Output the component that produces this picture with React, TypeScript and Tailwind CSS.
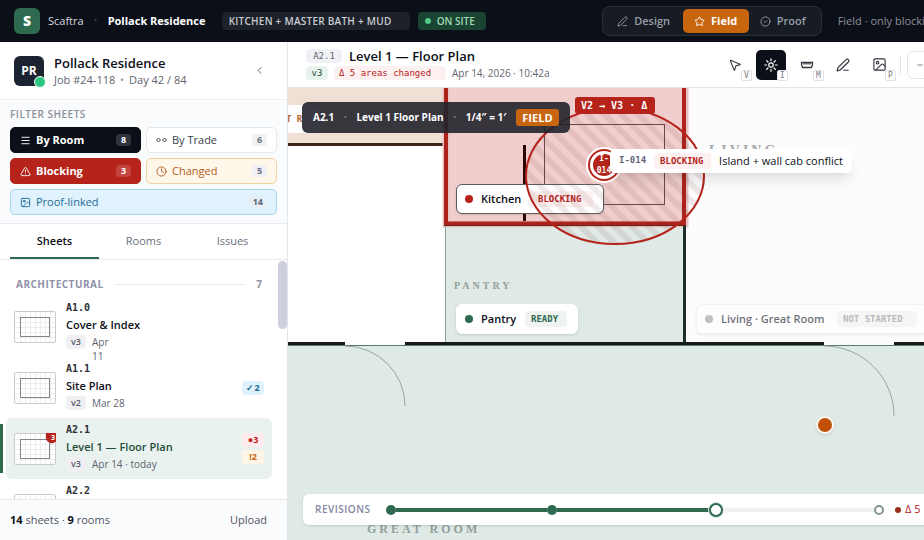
import type { ReactNode } from 'react';
import { clsx } from 'clsx';
import {
  ChevronLeft,
  CircleCheck,
  Clock,
  Image,
  Menu,
  Minus,
  MousePointer2,
  PenLine,
  Star,
  TriangleAlert,
} from 'lucide-react';

const MONO = "font-['DejaVu_Sans_Mono','Liberation_Mono',monospace]";
const SERIF = "font-['Liberation_Serif',serif]";

const TopBar = () => (
  <header className="flex h-[42px] shrink-0 items-center bg-[#0b0f17] pl-3.5 whitespace-nowrap">
    <div className="flex size-[26px] shrink-0 items-center justify-center rounded-md bg-[#2d6a4f] text-sm font-extrabold text-white">
      S
    </div>
    <span className="ml-2 shrink-0 text-[11px] text-[#d6d9de]">Scaftra</span>
    <span className="w-6 shrink-0 text-center text-xs text-[#5d636d]">·</span>
    <span className="w-[100px] shrink-0 text-[11px] font-bold text-white">Pollack Residence</span>
    <span className="ml-3.5 w-[188px] shrink-0 rounded bg-[#1d212a] px-[7px] text-[10px] leading-[18px] font-semibold tracking-wide text-[#c9ccd2]">
      KITCHEN + MASTER BATH + MUD
    </span>
    <span className="ml-2 flex w-[68px] shrink-0 items-center gap-1.5 rounded bg-[#1a4431] px-[7px] text-[10px] leading-[18px] font-semibold text-[#9fdcb8]">
      <span className="size-1.5 rounded-full bg-[#52c98a]" />
      ON SITE
    </span>
    <nav className="ml-[116px] flex h-[30px] w-[220px] shrink-0 items-center rounded-lg border border-[#2b3038] bg-[#161b24] px-0.5 text-[11px] font-semibold text-[#9a9fa8]">
      <button className="flex w-[78px] items-center justify-center gap-1.5">
        <PenLine size={11} />
        Design
      </button>
      <button className="flex h-6 w-[66px] items-center justify-center gap-1.5 rounded-[5px] bg-[#c8650f] font-bold text-white">
        <Star size={11} />
        Field
      </button>
      <button className="flex w-[68px] items-center justify-center gap-1.5">
        <CircleCheck size={11} />
        Proof
      </button>
    </nav>
    <span className="ml-4 shrink-0 text-[11px] text-[#8b9099]">Field · only blocking</span>
  </header>
);

interface FilterProps {
  icon: ReactNode;
  label: string;
  count: number;
  className: string;
  countClass: string;
}

const Filter = ({ icon, label, count, className, countClass }: FilterProps) => (
  <button
    className={clsx('flex h-[26px] items-center gap-[5px] rounded-[5px] border px-[9px] text-[11px]', className)}
  >
    {icon}
    <span>{label}</span>
    <span className={clsx('ml-auto min-w-[15px] rounded-sm px-1 text-[9px] leading-3 font-bold', countClass)}>
      {count}
    </span>
  </button>
);

const TradeIcon = () => (
  <svg width="11" height="10" viewBox="0 0 11 10" fill="none" stroke="currentColor">
    <path d="M2.500 3 4.500 5 2.500 7 .5 5ZM8.500 3 10.500 5 8.500 7 6.500 5Z" />
  </svg>
);

const Filters = () => (
  <section className="border-b border-[#e8eaed] bg-[#fafbfc] px-2.5 pt-2 pb-2">
    <h2 className="mb-1.5 text-[10px] leading-[13px] font-semibold tracking-wider text-[#8b8f9c]">FILTER SHEETS</h2>
    <div className="grid grid-cols-2 gap-[5px]">
      <Filter
        icon={<Menu size={11} />}
        label="By Room"
        count={8}
        className="border-[#0b0f17] bg-[#0b0f17] font-bold text-white"
        countClass="bg-[#30343c]"
      />
      <Filter
        icon={<TradeIcon />}
        label="By Trade"
        count={6}
        className="border-[#e4e7eb] bg-white font-medium text-[#3a3f4a]"
        countClass="bg-[#f1f2f4] text-[#6b7080]"
      />
      <Filter
        icon={<TriangleAlert size={11} />}
        label="Blocking"
        count={3}
        className="border-[#b5231a] bg-[#b5231a] font-bold text-white"
        countClass="bg-[#c5453e]"
      />
      <Filter
        icon={<Clock size={11} />}
        label="Changed"
        count={5}
        className="border-[#f0d2a4] bg-[#fff8ea] font-medium text-[#b45a1b]"
        countClass="bg-[#f1f0f4] text-[#6b6f8c]"
      />
      <Filter
        icon={<Image size={11} />}
        label="Proof-linked"
        count={14}
        className="col-span-2 border-[#a5d8f0] bg-[#e0f2fd] font-medium text-[#1d6a96]"
        countClass="bg-[#e6eff6] text-[#5a6474]"
      />
    </div>
  </section>
);

const SheetThumb = ({ flag }: { flag?: boolean }) => (
  <svg width="42" height="32" viewBox="0 0 42 32" className="shrink-0">
    <rect x=".5" y=".5" width="41" height="31" rx="1.500" fill="#fff" stroke="#c9cbce" />
    <path
      d="M6.500 1v30M11.500 1v30M16.500 1v30M21.500 1v30M26.500 1v30M31.500 1v30M36.500 1v30M1 6.500h40M1 11.500h40M1 16.500h40M1 21.500h40M1 26.500h40"
      stroke="#ededef"
    />
    <rect x="6.500" y="6.500" width="29" height="19" fill="none" stroke="#85878b" />
    {flag && (
      <>
        <path d="M32 0h10v8.500A6 6 0 0 1 32 3Z" fill="#b5231a" />
        <text x="37" y="7" fontSize="7" fontWeight="700" fill="#fff">
          3
        </text>
      </>
    )}
  </svg>
);

interface Sheet {
  code: string;
  title?: string;
  version?: string;
  date?: string;
  narrow?: boolean;
  active?: boolean;
  badges?: { text: string; className: string }[];
}

const sheets: Sheet[] = [
  { code: 'A1.0', title: 'Cover & Index', version: 'v3', date: 'Apr 11', narrow: true },
  {
    code: 'A1.1',
    title: 'Site Plan',
    version: 'v2',
    date: 'Mar 28',
    badges: [{ text: '✓2', className: 'bg-[#dff1fd] text-[#1d6a96]' }],
  },
  {
    code: 'A2.1',
    title: 'Level 1 — Floor Plan',
    version: 'v3',
    date: 'Apr 14 · today',
    active: true,
    badges: [
      { text: '●3', className: 'bg-[#fdeceb] text-[#b5231a]' },
      { text: '!2', className: 'bg-[#fff5e4] text-[#c8650f]' },
    ],
  },
  { code: 'A2.2' },
];

const SheetRow = ({ code, title, version, date, narrow, active, badges = [] }: Sheet) => (
  <li className="relative px-1.5">
    {active && <span className="absolute inset-y-1.5 left-0 w-[3px] bg-[#2d6a4f]" />}
    <button
      className={clsx('flex h-[61px] w-full items-start rounded-md px-2 text-left', active && 'bg-[#e9f2ee]')}
    >
      <span className="self-center">
        <SheetThumb flag={active} />
      </span>
      <span className="ml-2.5 flex-1 pt-1">
        <span className={clsx('block text-[10px] leading-[15px] font-bold text-[#2c3038]', MONO)}>{code}</span>
        {title && (
          <span
            className={clsx('block text-[11px] leading-5 font-semibold', active ? 'text-[#1f4d3a]' : 'text-[#0b0f17]')}
          >
            {title}
          </span>
        )}
        {version && (
          <span className="flex items-start">
            <span className="w-5 rounded-sm bg-[#f0f0f4] text-center text-[9px] leading-[14px] font-semibold text-[#555a68]">
              {version}
            </span>
            <span className={clsx('ml-1.5 text-[10px] leading-[14px] text-[#5f6470]', narrow && 'w-5')}>{date}</span>
          </span>
        )}
      </span>
      <span className="flex flex-col items-end gap-[3px] self-center">
        {badges.map((b) => (
          <span
            key={b.text}
            className={clsx('w-[22px] rounded-sm text-center text-[9px] leading-[14px] font-bold', b.className)}
          >
            {b.text}
          </span>
        ))}
      </span>
    </button>
  </li>
);

const Sidebar = () => (
  <aside className="flex w-72 shrink-0 flex-col border-r border-[#e2e5ea] bg-white">
    <div className="flex h-[58px] shrink-0 items-center border-b border-[#eceef1] pr-[22px] pl-3.5">
      <div className="relative flex size-[30px] items-center justify-center rounded-md bg-[#1c2330] text-xs font-bold text-white">
        PR
        <span className="absolute -right-0.5 -bottom-0.5 size-3 rounded-full border border-white bg-[#2bc780]" />
      </div>
      <div className="ml-2.5">
        <h1 className="text-[13px] leading-[18px] font-semibold text-[#0b0f17]">Pollack Residence</h1>
        <p className="text-[11px] leading-4 text-[#5f6470]">
          Job #24-118 <span className="mx-0.5 text-[#9a9faa]">•</span> Day 42 / 84
        </p>
      </div>
      <button aria-label="Collapse sidebar" className="ml-auto text-[#4a4f5a]">
        <ChevronLeft size={11} />
      </button>
    </div>
    <Filters />
    <div
      role="tablist"
      className="flex h-9 shrink-0 border-b border-[#e8eaed] px-2.5 text-[11px] font-medium text-[#6b7080]"
    >
      <button role="tab" aria-selected className="flex-1 border-b-2 border-[#2d6a4f] pt-0.5 font-semibold text-[#0b0f17]">
        Sheets
      </button>
      <button role="tab" className="flex-1">
        Rooms
      </button>
      <button role="tab" className="flex-1">
        Issues
      </button>
    </div>
    <div className="flex min-h-0 flex-1">
      <div className="flex-1 overflow-hidden pt-4">
        <div className="mb-1 flex items-center gap-2.5 px-4 text-[10px] leading-4 font-bold text-[#8f90a6]">
          <span className="tracking-wider">ARCHITECTURAL</span>
          <span className="h-px flex-1 bg-[#e8eaed]" />
          <span>7</span>
        </div>
        <ul>
          {sheets.map((s) => (
            <SheetRow key={s.code} {...s} />
          ))}
        </ul>
      </div>
      <div className="w-[9px] pt-px">
        <div className="h-[68px] rounded-full bg-[#ccd0dc]" />
      </div>
    </div>
    <footer className="flex h-[41px] shrink-0 items-center justify-between border-t border-[#e8eaed] bg-[#fafbfc] pr-5 pl-2.5 text-[#4f5460]">
      <p className="text-[11px]">
        <b className="text-[#0b0f17]">14</b> sheets · <b className="text-[#0b0f17]">9</b> rooms
      </p>
      <button className="text-[11px] font-medium">Upload</button>
    </footer>
  </aside>
);

const IssueIcon = () => (
  <svg width="14" height="14" viewBox="0 0 14 14" fill="none" stroke="currentColor" strokeWidth="1.200" strokeLinecap="round">
    <circle cx="7" cy="7" r="2.200" />
    <path d="M7 .8v1.900M7 11.300v1.900M.8 7h1.900M11.300 7h1.900M2.600 2.600 4 4M10 10l1.400 1.400M2.600 11.400 4 10M10 4l1.400-1.400" />
  </svg>
);

const RulerIcon = () => (
  <svg width="14" height="14" viewBox="0 0 14 14" fill="none" stroke="currentColor" strokeWidth="1.300">
    <path d="M1.500 4.500h11v2L11.500 9.500h-9L1.500 6.500ZM4 4.500v2M6 4.500v2M8 4.500v2M10 4.500v2" />
  </svg>
);

const tools = [
  { name: 'Select', hint: 'V', icon: <MousePointer2 size={14} strokeWidth={1.8} /> },
  { name: 'Issue', hint: 'I', icon: <IssueIcon />, active: true },
  { name: 'Measure', hint: 'M', icon: <RulerIcon /> },
  { name: 'Markup', hint: '', icon: <PenLine size={14} /> },
  { name: 'Photo', hint: 'P', icon: <Image size={15} strokeWidth={1.8} /> },
];

const SheetToolbar = () => (
  <div className="flex h-[46px] shrink-0 items-center border-b border-[#e2e4e8] bg-white pr-3 pl-[18px] whitespace-nowrap">
    <div>
      <div className="flex items-center">
        <span
          className={clsx('w-9 rounded-sm bg-[#eff1f4] text-center text-[9px] leading-[14px] text-[#5f6470]', MONO)}
        >
          A2.1
        </span>
        <h2 className="ml-[7px] text-[13px] leading-4 font-semibold text-[#0b0f17]">Level 1 — Floor Plan</h2>
      </div>
      <div className="mt-px flex items-center gap-1.5">
        <span
          className={clsx('w-[22px] rounded-sm bg-[#e9f3ee] text-center text-[9px] leading-[14px] text-[#1f4d3a]', MONO)}
        >
          v3
        </span>
        <span className={clsx('w-28 rounded-sm bg-[#fdf0f0] pl-[5px] text-[9px] leading-[14px] text-[#b5231a]', MONO)}>
          Δ 5 areas changed
        </span>
        <span className="text-[10px] leading-4 text-[#5f6470]">Apr 14, 2026 · 10:42a</span>
      </div>
    </div>
    <div className="ml-auto flex items-center gap-1.5">
      {tools.map((t) => (
        <button
          key={t.name}
          aria-label={t.name}
          className={clsx(
            'relative flex size-[30px] items-center justify-center rounded-[5px]',
            t.active ? 'bg-[#0b0f17] text-white' : 'text-[#33373f]',
          )}
        >
          {t.icon}
          {t.hint && (
            <span
              className={clsx(
                'absolute -right-0.5 -bottom-px size-[11px] rounded-xs border border-[#e0e2e6] bg-white text-center text-[8px] leading-[9px] text-[#777b85]',
                MONO,
              )}
            >
              {t.hint}
            </span>
          )}
        </button>
      ))}
      <span className="h-5 w-px bg-[#e2e4e8]" />
      <button
        aria-label="Zoom out"
        className="flex h-7 w-[69px] items-center rounded-md border border-[#e2e4e8] pl-2 text-[#4a4f5a]"
      >
        <Minus size={8} />
      </button>
    </div>
  </div>
);

// Walls, rooms and door swings. Origin is the top-left corner of the canvas.
const FloorPlan = () => (
  <svg width="1000" height="600" className="absolute top-0 left-0" fill="none">
    <rect width="1000" height="600" fill="#fcfcfc" />
    <rect width="157" height="256" fill="#fff" />
    <rect width="157" height="56" fill="#f0dfd4" />
    <path d="M0 56.500h157" stroke="#3d2417" strokeWidth="3" />
    <rect x="157" y="136" width="238" height="120" fill="#dfe9e5" />
    <rect y="257" width="1000" height="343" fill="#dfe9e5" />
    <rect x="158" y="-10" width="239" height="146" fill="#efcecd" stroke="#e7c3c1" strokeWidth="7" />
    <rect x="158" y="-10" width="238" height="145.500" stroke="#ad221b" strokeWidth="4" />
    <path d="M156 137.500h242" stroke="#5f2320" />
    <path d="M236.500 57v76" stroke="#2c0505" strokeWidth="3" />
    <rect x="256.500" y="36.500" width="120" height="80" stroke="#6a4645" />
    <path d="M157.500 138v118" stroke="#86a398" />
    <path d="M396.500 138v118" stroke="#1f2f2b" strokeWidth="3" />
    <path d="M0 257.500h1000" stroke="#5b7a6f" />
    <path d="M0 255.500h57M117 255.500h419M606 255.500h394" stroke="#151b1a" strokeWidth="3" />
    <path d="M57 258a60 60 0 0 1 60 60M536 258a70 70 0 0 1 70 70" stroke="#98a5a1" />
  </svg>
);

const RevisionCloud = () => (
  <svg width="182" height="140" viewBox="0 0 182 140" className="absolute top-[18px] left-[236px]">
    <defs>
      <pattern id="hatch" width="12" height="12" patternUnits="userSpaceOnUse" patternTransform="rotate(-45)">
        <rect width="6" height="12" fill="#7a3030" fillOpacity=".1" />
      </pattern>
    </defs>
    <ellipse cx="91" cy="70" rx="89" ry="68" fill="url(#hatch)" stroke="#b5231a" strokeWidth="2" />
  </svg>
);

interface RoomTagProps {
  name: string;
  status: string;
  className: string;
  dotClass: string;
  statusClass: string;
}

const RoomTag = ({ name, status, className, dotClass, statusClass }: RoomTagProps) => (
  <button
    className={clsx(
      'absolute flex h-[30px] items-center rounded-md bg-white pr-2.5 pl-2 whitespace-nowrap shadow-sm',
      className,
    )}
  >
    <span className={clsx('size-2 rounded-full', dotClass)} />
    <span className="ml-2 text-[11px] font-semibold text-[#0b0f17]">{name}</span>
    <span className={clsx('ml-auto rounded-sm text-[9px] leading-4 font-bold', MONO, statusClass)}>{status}</span>
  </button>
);

const Timeline = () => (
  <div className="absolute inset-x-[15px] bottom-[15px] flex h-[31px] items-center rounded-md bg-white px-3 shadow-sm">
    <span className="w-[71px] shrink-0 text-[10px] font-semibold tracking-wider text-[#8486a3]">REVISIONS</span>
    <div className="flex flex-1 items-center">
      <span className="size-2.5 rounded-full bg-[#2d6a4f]" />
      <span className="h-1 flex-1 bg-[#2d6a4f]" />
      <span className="size-2.5 rounded-full bg-[#2d6a4f]" />
      <span className="h-1 flex-1 bg-[#2d6a4f]" />
      <span className="size-3.5 rounded-full border-2 border-[#2d6a4f] bg-white ring-1 ring-[#d5e8df]" />
      <span className="h-1 flex-1 bg-[#f0f1f2]" />
      <span className="size-2.5 rounded-full border-2 border-[#84988f] bg-white" />
    </div>
    <span className="flex w-[77px] shrink-0 items-center gap-1 pl-[11px] text-[11px] text-[#b5231a]">
      <span className="size-1.5 rounded-full bg-[#98301c]" />Δ 5
    </span>
  </div>
);

const Canvas = () => (
  <div className="relative flex-1 overflow-hidden">
    <FloorPlan />
    <span className={clsx('absolute top-[53px] left-[421px] text-sm font-bold tracking-[3px] text-[#a3a6ab]', SERIF)}>
      LIVING
    </span>
    <span className={clsx('absolute top-[190px] left-[166px] text-[10px] font-bold tracking-[3px] text-[#93a09c]', SERIF)}>
      PANTRY
    </span>
    <span className={clsx('absolute top-[433px] left-[79px] text-xs font-bold tracking-[3px] text-[#93a09c]', SERIF)}>
      GREAT ROOM
    </span>

    <span
      className={clsx(
        'absolute top-[17px] -left-2 h-7 w-10 rounded-md bg-white pl-1.5 text-[9px] leading-7 font-bold text-[#b5692c]',
        MONO,
      )}
    >
      T R
    </span>
    <RoomTag
      name="Kitchen"
      status="BLOCKING"
      className="top-24 left-[168px] w-[148px] border border-[#5b5b60]"
      dotClass="bg-[#b5231a]"
      statusClass="w-[65px] bg-[#fdf0f0] pl-2.5 text-left text-[#b5231a]"
    />
    <RoomTag
      name="Pantry"
      status="READY"
      className="top-[216px] left-[168px] w-[122px] border border-white"
      dotClass="bg-[#2d6a4f]"
      statusClass="w-[42px] bg-[#eff4f2] pl-1.5 text-left text-[#2d6a4f]"
    />
    <RoomTag
      name="Living · Great Room"
      status="NOT STARTED"
      className="top-[216px] left-[408px] w-[232px] border border-[#eceded] opacity-60"
      dotClass="bg-[#9b9b9b]"
      statusClass="w-20 bg-[#f1f1f2] pl-1.5 text-left text-[#8c9093]"
    />

    <RevisionCloud />
    <span
      className={clsx(
        'absolute top-[9px] left-[287px] w-20 rounded-[3px] bg-[#b5231a] pl-1.5 text-[10px] leading-[17px] font-bold text-white',
        MONO,
      )}
    >
      V2 → V3 · Δ
    </span>

    <button
      className={clsx(
        'absolute top-[63px] left-[302px] flex size-7 items-center justify-center rounded-full border-[3px] border-white bg-[#b5231a] text-center text-[8px] leading-3 font-bold text-white shadow-[0_0_0_2px_#b5231a,0_0_0_4px_#fff]',
        MONO,
      )}
    >
      I-
      <br />
      014
    </button>
    <div className="absolute top-[61px] left-[322px] flex h-6 w-[242px] items-center rounded-[5px] bg-white pl-[9px] text-[11px] whitespace-nowrap text-[#0b0f17] shadow-lg">
      <span className={clsx('text-[9px] font-bold text-[#5f6478]', MONO)}>I-014</span>
      <span
        className={clsx('mr-2 ml-2 w-[57px] rounded-sm bg-[#fdf0f0] pl-1.5 text-[9px] leading-4 font-bold text-[#b5231a]', MONO)}
      >
        BLOCKING
      </span>
      Island + wall cab conflict
    </div>
    <button
      aria-label="Open issue"
      className="absolute top-[328px] left-[528px] size-[18px] rounded-full border-2 border-[#fff9ef] bg-[#c2500a] shadow"
    />

    <div className="absolute top-3.5 left-3.5 flex h-[31px] w-[268px] items-center justify-between rounded-md bg-[#22232c]/90 px-[11px] text-[10px] font-bold whitespace-nowrap text-white">
      <span>A2.1</span>
      <span className="text-[#8b8f99]">·</span>
      <span>Level 1 Floor Plan</span>
      <span className="text-[#8b8f99]">·</span>
      <span>1/4″ = 1′</span>
      <span className="w-[43px] rounded-[3px] bg-[#c8650f] text-center text-[11px] leading-[17px]">FIELD</span>
    </div>
    <Timeline />
  </div>
);

export default function App() {
  return (
    <div className="flex h-screen flex-col overflow-hidden bg-white font-['Open_Sans','Noto_Sans',sans-serif]">
      <TopBar />
      <div className="flex min-h-0 flex-1">
        <Sidebar />
        <main className="flex min-w-[700px] flex-1 flex-col">
          <SheetToolbar />
          <Canvas />
        </main>
      </div>
    </div>
  );
}
